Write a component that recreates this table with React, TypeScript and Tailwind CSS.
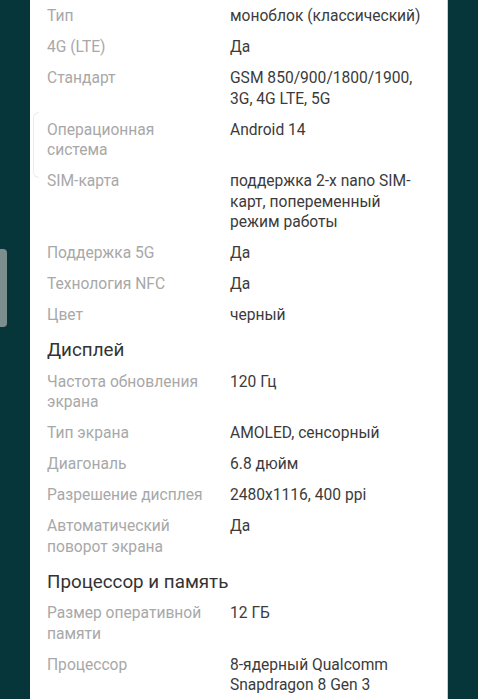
type Spec = { label: string; value: string };

const general: Spec[] = [
  { label: "Тип", value: "моноблок (классический)" },
  { label: "4G (LTE)", value: "Да" },
  { label: "Стандарт", value: "GSM 850/900/1800/1900, 3G, 4G LTE, 5G" },
  { label: "Операционная система", value: "Android 14" },
  { label: "SIM-карта", value: "поддержка 2-х nano SIM-карт, попеременный режим работы" },
  { label: "Поддержка 5G", value: "Да" },
  { label: "Технология NFC", value: "Да" },
  { label: "Цвет", value: "черный" },
];

const display: Spec[] = [
  { label: "Частота обновления экрана", value: "120 Гц" },
  { label: "Тип экрана", value: "AMOLED, сенсорный" },
  { label: "Диагональ", value: "6.8 дюйм" },
  { label: "Разрешение дисплея", value: "2480x1116, 400 ppi" },
  { label: "Автоматический поворот экрана", value: "Да" },
];

const cpu: Spec[] = [
  { label: "Размер оперативной памяти", value: "12 ГБ" },
  { label: "Процессор", value: "8-ядерный Qualcomm Snapdragon 8 Gen 3" },
];

function Rows({ items }: { items: Spec[] }) {
  return (
    <div className="flex flex-col gap-[10.5px]">
      {items.map((s) => (
        <div key={s.label} className="flex gap-[20px] text-[15.6px] leading-[20.5px]">
          <div className="w-[163px] shrink-0 text-[#a8a8a8]">{s.label}</div>
          <div className="w-[194px] text-[#3b3b3b]">{s.value}</div>
        </div>
      ))}
    </div>
  );
}

function Heading({ children }: { children: string }) {
  return <div className="text-[18.8px] leading-[24px] text-[#333333] pt-[2px] -mb-[1px]">{children}</div>;
}

export default function App() {
  return (
    <div className="relative w-[478px] h-[699px] bg-[#06363a] overflow-hidden font-['Roboto',sans-serif]">
      {/* side handle */}
      <div className="absolute left-0 top-[249px] w-[7px] h-[78px] rounded-r-[4px] bg-[#7d8e8e]" />

      <div className="ml-[30px] w-[418px] h-full bg-white border-r border-[#c9d0d0] pl-[17px] pt-[6px] flex flex-col gap-[10.5px] relative">
        {/* faint edge outline */}
        <div className="absolute left-[3px] top-[112px] w-[6px] h-[66px] rounded-l-[6px] border-l border-y border-[#ececec]" />
        <Rows items={general} />
        <Heading>Дисплей</Heading>
        <Rows items={display} />
        <Heading>Процессор и память</Heading>
        <Rows items={cpu} />
      </div>
    </div>
  );
}
